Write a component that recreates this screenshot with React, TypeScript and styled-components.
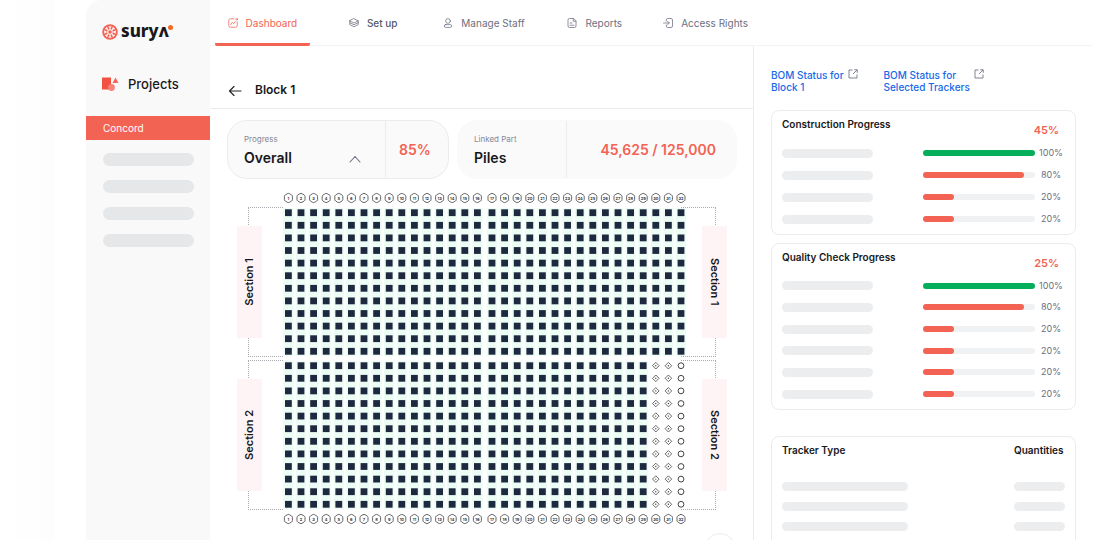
import React from "react";
import styled, { createGlobalStyle } from "styled-components";

const GlobalStyle = createGlobalStyle`
  *, *::before, *::after { box-sizing: border-box; }
  body {
    margin: 0;
    background: #ffffff;
    color: #18181b;
    font-family: Inter, "Noto Sans", "Liberation Sans", sans-serif;
  }
  h1, h2, p, ul { margin: 0; padding: 0; }
  ul { list-style: none; }
  button { font: inherit; color: inherit; background: none; border: 0; padding: 0; cursor: pointer; }
`;

const coral = "#f26354";
const line = "#ececee";
const muted = "#6b7080";

/* ---------- page frame ---------- */

const Page = styled.div`
  display: grid;
  grid-template-columns: 54px 32px minmax(0, 1fr) 9px;
  height: 100vh;
  overflow: hidden;
`;

const Backdrop = styled.div`
  grid-column: 1;
  background: linear-gradient(to right, #ffffff, #fdfdfd);
`;

const Frame = styled.div`
  grid-column: 3;
  display: grid;
  grid-template-columns: 124px minmax(0, 1fr);
`;

/* ---------- sidebar ---------- */

const Sidebar = styled.aside`
  display: flex;
  flex-direction: column;
  background: #f9f9f9;
  border-top-left-radius: 16px;
`;

const Brand = styled.a`
  display: flex;
  align-items: center;
  gap: 3px;
  height: 24px;
  margin: 20px 16px 0;
  color: #18181b;
  text-decoration: none;
`;

const Wordmark = styled.span`
  font-family: "Noto Sans", sans-serif;
  font-size: 17px;
  font-weight: 800;
  line-height: 22px;
  height: 24px;
`;

const BrandDot = styled.svg`
  align-self: flex-start;
  margin: 5px 0 0 -4px;
`;

const SideHeading = styled.h2`
  display: flex;
  align-items: center;
  gap: 9px;
  height: 20px;
  margin: 30px 16px 0;
  font-size: 13px;
  font-weight: 500;
`;

const SideActive = styled.a`
  margin-top: 22px;
  padding-left: 17px;
  background: ${coral};
  color: #ffffff;
  font-size: 10px;
  line-height: 24px;
  text-decoration: none;
`;

const SideList = styled.ul`
  display: flex;
  flex-direction: column;
  gap: 14px;
  padding: 13px 16px 13px 17px;
`;

const SidePlaceholder = styled.li`
  height: 13px;
  border-radius: 7px;
  background: #e6e7e9;
`;

/* ---------- header ---------- */

const Content = styled.div`
  display: grid;
  grid-template-columns: minmax(0, 1fr) 339px;
  grid-template-rows: 46px minmax(0, 1fr);
`;

const Header = styled.header`
  grid-column: 1 / -1;
  display: grid;
  grid-template-columns: subgrid;
  border-bottom: 1px solid #f3f3f4;
`;

const Nav = styled.nav`
  display: grid;
  grid-template-columns: repeat(5, minmax(0, 1fr));
  gap: 16px;
  padding-left: 5px;
  height: 46px;
`;

const Tab = styled.a<{ $tone?: "active" | "strong" }>`
  display: flex;
  align-items: center;
  justify-content: center;
  gap: 8px;
  border-bottom: 3px solid ${(p) => (p.$tone === "active" ? coral : "transparent")};
  border-radius: 2px;
  padding-top: 3px;
  color: ${(p) => (p.$tone === "active" ? coral : p.$tone === "strong" ? "#555967" : muted)};
  font-size: 10px;
  font-weight: ${(p) => (p.$tone === "strong" ? 500 : 400)};
  text-decoration: none;
  white-space: nowrap;
`;

/* ---------- main column ---------- */

const Main = styled.main`
  display: flex;
  flex-direction: column;
`;

const TitleBar = styled.div`
  display: flex;
  align-items: center;
  gap: 13px;
  height: 63px;
  padding: 26px 18px 0;
  border-bottom: 1px solid ${line};
`;

const BackButton = styled.button`
  display: flex;
`;

const Title = styled.h1`
  font-size: 12px;
  font-weight: 600;
  line-height: 16px;
`;

const Stats = styled.div`
  display: grid;
  grid-template-columns: 222fr 280fr;
  gap: 8px;
  padding: 11px 16px 0 17px;
`;

const StatCard = styled.section<{ $outlined?: boolean }>`
  display: flex;
  height: 59px;
  border: 1px solid ${(p) => (p.$outlined ? line : "#fafafa")};
  border-radius: 20px;
  background: #fafafa;
`;

const StatInfo = styled.div<{ $width: number }>`
  display: flex;
  align-items: flex-end;
  justify-content: space-between;
  width: ${(p) => p.$width}px;
  padding: 0 24px 10px 16px;
  border-right: 1px solid ${line};
`;

const StatLabel = styled.p`
  color: #858996;
  font-size: 8px;
  line-height: 18px;
  white-space: nowrap;
`;

const StatName = styled.p`
  font-size: 14px;
  font-weight: 600;
  line-height: 20px;
`;

const StatValue = styled.p<{ $end?: boolean }>`
  flex: 1;
  align-self: center;
  padding-right: ${(p) => (p.$end ? 20 : 4)}px;
  color: ${coral};
  font-size: 14px;
  font-weight: 600;
  text-align: ${(p) => (p.$end ? "right" : "center")};
`;

const Map = styled.div`
  display: grid;
  grid-template-columns: 45px 406px 40px;
  justify-content: center;
  row-gap: 3px;
  padding: 13px 0 0 2px;
`;

const BadgeRow = styled.svg`
  grid-column: 2;
  display: block;
`;

const Plot = styled.svg`
  grid-column: 2;
  display: block;
`;

const Bracket = styled.div<{ $side: "left" | "right" }>`
  grid-column: ${(p) => (p.$side === "left" ? 1 : 3)};
  display: flex;
  align-items: center;
  height: 150px;
  margin: ${(p) => (p.$side === "left" ? "0 -1px 0 11px" : "0 12px 0 -7px")};
  justify-content: ${(p) => (p.$side === "left" ? "flex-start" : "flex-end")};
  border: 1px dotted #a9abb0;
  border-${(p) => (p.$side === "left" ? "right" : "left")}: 0;
`;

const SectionLabel = styled.span<{ $side: "left" | "right" }>`
  flex: none;
  width: 25px;
  height: 112px;
  margin: ${(p) => (p.$side === "left" ? "0 0 0 -12px" : "0 -12px 0 0")};
  background: #fff4f5;
  font-size: 11px;
  font-weight: 600;
  line-height: 25px;
  text-align: center;
  writing-mode: ${(p) => (p.$side === "left" ? "sideways-lr" : "vertical-rl")};
`;

const FloatingButton = styled.button`
  position: fixed;
  left: calc(100% - 397px);
  top: calc(100% - 7px);
  width: 32px;
  height: 32px;
  border: 1px solid ${line};
  border-radius: 50%;
  background: #ffffff;
`;

/* ---------- right column ---------- */

const Panel = styled.aside`
  display: flex;
  flex-direction: column;
  padding: 23px 16px 0 17px;
  border-left: 1px solid ${line};
`;

const Links = styled.div`
  display: flex;
  gap: 26px;
  height: 41px;
`;

const BomLink = styled.a`
  display: flex;
  gap: 4px;
  color: #1769e8;
  font-size: 10px;
  font-weight: 500;
  line-height: 12px;
  text-decoration: none;
  white-space: nowrap;
`;

const Card = styled.section<{ $gap?: number }>`
  margin-bottom: ${(p) => p.$gap ?? 8}px;
  padding: 0 10px;
  border: 1px solid ${line};
  border-radius: 8px;
`;

const CardHead = styled.div`
  display: flex;
  justify-content: space-between;
  height: 31px;
  padding: 5px 6px 0 0;
`;

const CardTitle = styled.h2`
  font-size: 10px;
  font-weight: 600;
  line-height: 16px;
`;

const CardTotal = styled.p`
  padding-top: 6px;
  color: ${coral};
  font-size: 11px;
  font-weight: 600;
  line-height: 16px;
`;

const Rows = styled.ul<{ $minHeight: number }>`
  display: grid;
  grid-auto-rows: 1fr;
  min-height: ${(p) => p.$minHeight}px;
  margin-bottom: 4px;
`;

const Row = styled.li`
  display: grid;
  grid-template-columns: 91px minmax(0, 1fr) 112px 30px;
  align-items: center;
`;

const Placeholder = styled.span<{ $width: number }>`
  display: block;
  width: ${(p) => p.$width}px;
  height: 9px;
  border-radius: 5px;
  background: #ecedef;
`;

const Track = styled.div`
  grid-column: 3;
  height: 6px;
  border-radius: 3px;
  background: #f0f1f3;
`;

const Fill = styled.div<{ $done: boolean }>`
  height: 6px;
  border-radius: 3px;
  background: ${(p) => (p.$done ? "#05ae5b" : coral)};
`;

const Percent = styled.span`
  padding-left: 2px;
  color: ${muted};
  font-size: 9px;
  line-height: 16px;
  text-align: center;
`;

const Table = styled.table`
  width: 100%;
  border-collapse: collapse;
  margin-bottom: 16px;

  th {
    height: 39px;
    padding: 5px 0 0;
    font-size: 10px;
    font-weight: 600;
    line-height: 16px;
    text-align: left;
    vertical-align: top;
  }
  th:last-child { width: 51px; }
  td { height: 20px; padding: 0; }
`;

/* ---------- icons ---------- */

const Icon = ({ children, size = 10 }: { children: React.ReactNode; size?: number }) => (
  <svg width={size} height={size} viewBox="0 0 20 20" fill="none" stroke="currentColor"
    strokeWidth="1.5" strokeLinecap="round" strokeLinejoin="round" aria-hidden="true">
    {children}
  </svg>
);

const DashboardIcon = () => (
  <Icon>
    <path d="M12 1.500H5A3.500 3.500 0 0 0 1.500 5v10A3.500 3.500 0 0 0 5 18.500h10a3.500 3.500 0 0 0 3.500-3.500V8" />
    <path d="M5.500 13l3-4.500 3 3L14.500 7" />
    <circle cx="17.500" cy="2.500" r="1.800" />
  </Icon>
);
const LayersIcon = () => (
  <Icon size={10}>
    <path strokeWidth="1.300" d="M10 1.500L18.500 5.700 10 10 1.500 5.700z" />
    <path strokeWidth="1.300" d="M1.500 5.700v3.600L10 13.500l8.500-4.200V5.700" />
    <path strokeWidth="1.300" d="M1.500 9.500v3.800L10 17.500l8.500-4.200V9.500" />
  </Icon>
);
const StaffIcon = () => (
  <Icon>
    <circle cx="10" cy="6" r="4.700" />
    <rect x="2.500" y="13.200" width="15" height="5.600" rx="2.800" />
  </Icon>
);
const ReportIcon = () => (
  <Icon>
    <path d="M12.500 1H5a3 3 0 0 0-3 3v12a3 3 0 0 0 3 3h10a3 3 0 0 0 3-3V6.500z" />
    <path d="M12.500 1v5.500H18M6 10h4M6 14.500h8" />
  </Icon>
);
const AccessIcon = () => (
  <Icon>
    <path d="M6.500 6V4a3 3 0 0 1 3-3H16a3 3 0 0 1 3 3v12a3 3 0 0 1-3 3H9.500a3 3 0 0 1-3-3v-2" />
    <path d="M1 10h11.500M9 6.500l3.500 3.500L9 13.500" />
  </Icon>
);

const ExternalIcon = () => (
  <svg width="10" height="10" viewBox="0 0 20 20" fill="none" stroke="#6b7080" strokeWidth="1.700" aria-hidden="true">
    <path d="M9 2H2v16h16v-7M12.500 1.500H18.500V7.500M18 2l-8 8" />
  </svg>
);

const rays = Array.from({ length: 8 }, (_, i) => i * 45);
const SunLogo = () => (
  <svg width="16" height="16" viewBox="0 0 32 32" aria-hidden="true">
    <circle cx="16" cy="16" r="15.500" fill={coral} />
    {rays.map((a) => (
      <path key={a} d="M13.500 4.500L16 7.500l2.500-3M16 7.500v4" transform={`rotate(${a} 16 16)`}
        stroke="#fff" strokeWidth="2.200" fill="none" />
    ))}
    <circle cx="16" cy="16" r="4.500" fill="none" stroke="#fff" strokeWidth="1.800" />
  </svg>
);

const ShapesIcon = () => (
  <svg width="17" height="14" viewBox="0 0 34 28" aria-hidden="true">
    <rect x="0" y="1" width="18" height="24" fill="#f15242" />
    <path d="M27 1l6 11H21z" fill="#f4675a" />
    <circle cx="19" cy="21" r="6.800" fill="#f78277" />
  </svg>
);

/* ---------- tracker map ---------- */

const PITCH = 12.6;
const columns = Array.from({ length: 32 }, (_, i) => i);
const rowIndexes = Array.from({ length: 12 }, (_, i) => i);
const columnX = (i: number) => (i < 16 ? 6.4 + i * PITCH : 210 + (i - 16) * PITCH);

const Badges = () => (
  <BadgeRow width="406" height="12" viewBox="0 0 406 12">
    {columns.map((i) => (
      <g key={i} transform={`translate(${columnX(i)} 6)`}>
        <path d="M-1-4.300Q0-4.900 1-4.300L3.200-3Q4-2.500 4-1.600V1.600Q4 2.500 3.200 3L1 4.300Q0 4.900-1 4.300L-3.200 3Q-4 2.500-4 1.600V-1.600Q-4-2.500-3.200-3Z"
          fill="#fff" stroke="#3d3d40" strokeWidth="0.800" />
        <text y="1.500" textAnchor="middle" fontSize="4" fontWeight="600" fill="#18181b">{i + 1}</text>
      </g>
    ))}
  </BadgeRow>
);

const Pile = ({ x, y, kind }: { x: number; y: number; kind: "done" | "partial" | "open" }) => {
  if (kind === "done") return <rect x={x - 3.4} y={y - 3.4} width="6.800" height="6.800" fill="#1e293f" />;
  if (kind === "open") return <circle cx={x} cy={y} r="2.900" fill="none" stroke="#444" strokeWidth="1" />;
  return (
    <g>
      <path d={`M${x} ${y - 3.3}l3.300 3.300-3.300 3.300-3.300-3.300z`} fill="none" stroke="#444" strokeWidth="0.800" />
      <circle cx={x} cy={y} r="0.700" fill="#444" />
    </g>
  );
};

const SectionPlot = ({ complete }: { complete: number }) => (
  <Plot width="406" height="150" viewBox="0 0 406 150">
    {columns.map((i) => {
      const kind = i < complete ? "done" : i === 31 ? "open" : "partial";
      return (
        <g key={i}>
          {kind === "done" && <rect x={columnX(i) - 5.2} y="1" width="10.400" height="148" fill="#ebfdf5" />}
          {rowIndexes.map((r) => (
            <Pile key={r} x={columnX(i)} y={5.7 + r * PITCH} kind={kind} />
          ))}
        </g>
      );
    })}
  </Plot>
);

const MapSection = ({ name, complete }: { name: string; complete: number }) => (
  <>
    <Bracket $side="left"><SectionLabel $side="left">{name}</SectionLabel></Bracket>
    <SectionPlot complete={complete} />
    <Bracket $side="right"><SectionLabel $side="right">{name}</SectionLabel></Bracket>
  </>
);

/* ---------- progress cards ---------- */

type Progress = { percent: number; fill: number };
const full: Progress = { percent: 100, fill: 100 };
const most: Progress = { percent: 80, fill: 90 };
const low: Progress = { percent: 20, fill: 28 };

type ProgressCardProps = { title: string; total: string; rows: Progress[]; minHeight: number; gap?: number };

const ProgressCard = ({ title, total, rows, minHeight, gap }: ProgressCardProps) => (
  <Card $gap={gap}>
    <CardHead>
      <CardTitle>{title}</CardTitle>
      <CardTotal>{total}</CardTotal>
    </CardHead>
    <Rows $minHeight={minHeight}>
      {rows.map((row, i) => (
        <Row key={i}>
          <Placeholder $width={91} />
          <Track role="progressbar" aria-label={title} aria-valuenow={row.percent}>
            <Fill $done={row.percent === 100} style={{ width: `${row.fill}%` }} />
          </Track>
          <Percent>{row.percent}%</Percent>
        </Row>
      ))}
    </Rows>
  </Card>
);

export default function App() {
  return (
    <Page>
      <GlobalStyle />
      <Backdrop />
      <Frame>
        <Sidebar>
          <Brand href="#">
            <SunLogo />
            <Wordmark>suryʌ</Wordmark>
            <BrandDot width="5" height="5" viewBox="0 0 10 10" aria-hidden="true">
              <circle cx="5" cy="5" r="5" fill="#f26a21" />
            </BrandDot>
          </Brand>
          <SideHeading><ShapesIcon />Projects</SideHeading>
          <SideActive href="#concord">Concord</SideActive>
          <SideList>
            {[0, 1, 2, 3].map((i) => <SidePlaceholder key={i} />)}
          </SideList>
        </Sidebar>

        <Content>
          <Header>
            <Nav>
              <Tab href="#dashboard" $tone="active"><DashboardIcon />Dashboard</Tab>
              <Tab href="#setup" $tone="strong"><LayersIcon />Set up</Tab>
              <Tab href="#staff"><StaffIcon />Manage Staff</Tab>
              <Tab href="#reports"><ReportIcon />Reports</Tab>
              <Tab href="#access"><AccessIcon />Access Rights</Tab>
            </Nav>
          </Header>

          <Main>
            <TitleBar>
              <BackButton aria-label="Back">
                <svg width="14" height="12" viewBox="0 0 14 12" fill="none" stroke="#27272a" strokeWidth="1.200" strokeLinecap="round" strokeLinejoin="round">
                  <path d="M13 7H1.500M6 2.500L1.500 7 6 11.500" />
                </svg>
              </BackButton>
              <Title>Block 1</Title>
            </TitleBar>

            <Stats>
              <StatCard $outlined>
                <StatInfo $width={158}>
                  <div>
                    <StatLabel>Progress</StatLabel>
                    <StatName>Overall</StatName>
                  </div>
                  <BackButton aria-label="Choose progress type">
                    <svg width="12" height="16" viewBox="0 0 12 16" fill="none" stroke="#6b7080" strokeWidth="1.100" strokeLinecap="round" strokeLinejoin="round">
                      <path d="M1 10l5-5.500 5 5.500" />
                    </svg>
                  </BackButton>
                </StatInfo>
                <StatValue>85%</StatValue>
              </StatCard>
              <StatCard>
                <StatInfo $width={109}>
                  <div>
                    <StatLabel>Linked Part</StatLabel>
                    <StatName>Piles</StatName>
                  </div>
                </StatInfo>
                <StatValue $end>45,625 / 125,000</StatValue>
              </StatCard>
            </Stats>

            <Map>
              <Badges />
              <MapSection name="Section 1" complete={32} />
              <MapSection name="Section 2" complete={29} />
              <Badges />
            </Map>
          </Main>

          <Panel>
            <Links>
              <BomLink href="#bom-block">
                <span>BOM Status for<br />Block 1</span>
                <ExternalIcon />
              </BomLink>
              <BomLink href="#bom-trackers">
                <span>BOM Status for<br />Selected Trackers</span>
                <ExternalIcon />
              </BomLink>
            </Links>
            <ProgressCard title="Construction Progress" total="45%" rows={[full, most, low, low]} minHeight={88} />
            <ProgressCard title="Quality Check Progress" total="25%" rows={[full, most, low, low, low, low]} minHeight={130} gap={26} />
            <Card>
              <Table>
                <thead>
                  <tr><th scope="col">Tracker Type</th><th scope="col">Quantities</th></tr>
                </thead>
                <tbody>
                  {[0, 1, 2, 3].map((i) => (
                    <tr key={i}>
                      <td><Placeholder $width={126} /></td>
                      <td><Placeholder $width={51} /></td>
                    </tr>
                  ))}
                </tbody>
              </Table>
            </Card>
          </Panel>
        </Content>
      </Frame>
      <FloatingButton aria-label="Map options" />
    </Page>
  );
}
